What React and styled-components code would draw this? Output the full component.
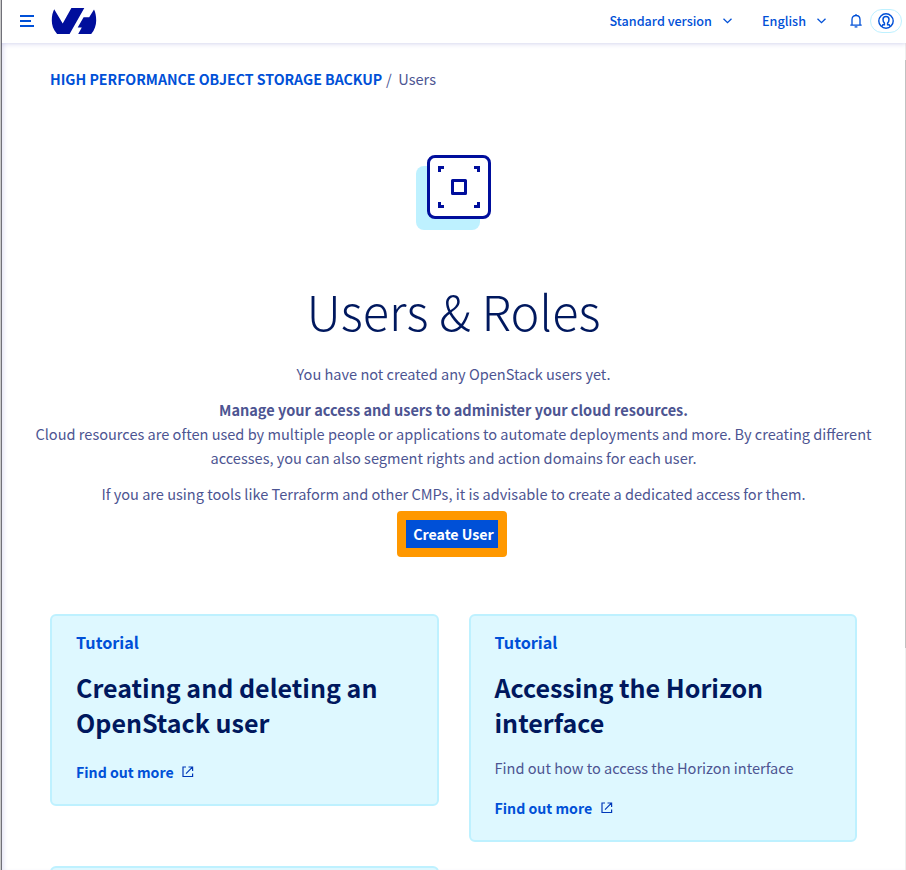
import React from 'react';
import styled, { createGlobalStyle } from 'styled-components';

const GlobalStyle = createGlobalStyle`
  * { box-sizing: border-box; }
  body { margin: 0; background: #fff; overflow: hidden; }
  h1, h2, h3, p { margin: 0; }
  svg { display: block; flex: none; }
`;

const Page = styled.div`
  position: relative;
  display: flex;
  flex-direction: column;
  width: 906px;
  height: 870px;
  overflow: hidden;
  background: #fff;
  border-left: 1px solid #c9c9c9;
  font-family: 'Noto Sans CJK SC', sans-serif;
  font-size: 14.57px;
  line-height: 24px;
  color: #4d5592;
`;

const Header = styled.header`
  display: flex;
  align-items: center;
  flex: none;
  height: 43px;
  padding: 0 4px 1px 18px;
  border-left: 1px solid #707078;
  background: #fff;
  box-shadow: 0 0 6px rgba(0, 14, 156, 0.2);
  z-index: 1;
`;

const LogoSlot = styled.div`
  margin-left: 17px;
  margin-right: auto;
`;

const Picker = styled.button`
  display: flex;
  align-items: center;
  gap: 10.5px;
  margin-right: ${(p) => p.$after}px;
  padding: 0;
  border: 0;
  background: none;
  font: 500 12.62px/20px 'Noto Sans CJK SC', sans-serif;
  color: #0050d7;
  white-space: nowrap;
`;

const Avatar = styled.div`
  display: flex;
  align-items: center;
  justify-content: center;
  width: 32px;
  height: 24px;
  margin-left: 8px;
  border: 1px solid #bef1ff;
  border-radius: 12px;
`;

const Body = styled.div`
  display: flex;
  flex: 1;
  min-height: 0;
  border-left: 1px solid #707078;
`;

const Content = styled.main`
  flex: 1;
  display: flex;
  flex-direction: column;
  box-shadow: inset 4px 0 4px -2px rgba(0, 14, 156, 0.1);
`;

const ScrollTrack = styled.div`
  width: 1px;
  padding-top: 17px;
  background: #eee;
`;

const ScrollThumb = styled.div`
  height: 588px;
  background: #c1c1c1;
`;

const Breadcrumb = styled.nav`
  display: flex;
  padding: 24px 48px 0;
  white-space: nowrap;
`;

const Crumb = styled.a`
  width: 333px;
  font-size: 14.15px;
  font-weight: 700;
  color: #0050d7;
`;

const Slash = styled.span`
  margin: 0 6.5px 0 3px;
`;

const Hero = styled.section`
  display: flex;
  flex-direction: column;
  align-items: center;
  padding-top: 64px;
  text-align: center;
  white-space: nowrap;
`;

const Title = styled.h1`
  margin-top: 49px;
  font-size: 48.7px;
  font-weight: 300;
  line-height: 60px;
  color: #00185e;
`;

const Text = styled.p`
  margin-top: ${(p) => p.$top || 12}px;
`;

const Strong = styled.strong`
  font-size: 14.54px;
  font-weight: 700;
`;

const Highlight = styled.div`
  display: flex;
  width: 110px;
  height: 46px;
  margin: 5px 3px 0 0;
  border: 9px solid #ff9800;
  border-radius: 4px;
  background: #ff9800;
`;

const PrimaryButton = styled.button`
  flex: 1;
  padding: 0 0 0 3px;
  border: 0;
  background: #0050d7;
  font: 700 14.2px/28px 'Noto Sans CJK SC', sans-serif;
  color: #fff;
  white-space: nowrap;
`;

const Cards = styled.section`
  display: grid;
  grid-template-columns: 389px 388px;
  align-items: start;
  column-gap: 30px;
  row-gap: 24px;
  padding: 57px 0 0 48px;
`;

const Card = styled.article`
  display: flex;
  flex-direction: column;
  align-items: flex-start;
  height: ${(p) => p.$height}px;
  padding: 14px 24px 0 ${(p) => p.$inset || 24}px;
  border: 2px solid #bef1ff;
  border-radius: 6px;
  background: #def8ff;
  white-space: nowrap;
`;

const Kind = styled.h3`
  font-size: 16.2px;
  font-weight: 700;
  line-height: 24px;
  color: #0050d7;
`;

const CardTitle = styled.h2`
  margin-top: 16px;
  font-size: 25.04px;
  font-weight: 700;
  line-height: 35px;
  color: #00185e;
`;

const CardText = styled.p`
  margin-top: 16px;
`;

const More = styled.a`
  display: flex;
  align-items: center;
  gap: 8.5px;
  margin-top: ${(p) => p.$top}px;
  font-size: 14.15px;
  font-weight: 700;
  color: #0050d7;
`;

const MenuIcon = () => (
  <svg width="14" height="13" viewBox="0 0 14 13" fill="#0050d7">
    <path d="M0 0h14v2H0zM0 5h11v2H0zM0 10h14v2H0z" />
  </svg>
);

const Logo = () => (
  <svg width="46" height="28" viewBox="51 7 46 28" fill="#000e9c">
    <path d="M54.2 9.2 62.7 23.4 71.4 8H84.3L69.6 33.9H57.1C53 29.5 51.8 25 51.8 20.5 51.8 16 52.6 12.3 54.2 9.2Z" />
    <path d="M94 9.4C95.5 12.4 96.2 16 96.2 20.4 96.2 25 94.6 30 91.2 33.9H78.2L81.8 27.6H77.7L83.6 17.3H89.2Z" />
  </svg>
);

const Chevron = () => (
  <svg width="9" height="6" viewBox="0 0 9 6" fill="none" stroke="#0050d7" strokeWidth="1.3">
    <path d="M.5 .7 4.5 4.6 8.5 .7" />
  </svg>
);

const Bell = () => (
  <svg width="12" height="14" viewBox="0 0 12 14" fill="none" stroke="#0050d7" strokeWidth="1.3">
    <path d="M.3 11.2H11.7M2 11V5.6C2 3 3.6 1.5 6 1.5S10 3 10 5.6V11M6 0V1.5" />
    <path d="M4.6 12.9H7.4" />
  </svg>
);

const UserIcon = () => (
  <svg width="16" height="16" viewBox="0 0 16 16" fill="none" stroke="#0050d7">
    <circle cx="8" cy="8" r="7.2" strokeWidth="1.4" />
    <path
      d="M3.9 13.2 4.9 11.8H6.4V10C5.4 9 5 7.9 5 6.5 5 4.6 6.1 3.5 8 3.5S11 4.6 11 6.5C11 7.9 10.6 9 9.6 10V11.8H11.1L12.1 13.2"
      strokeWidth="1.5"
    />
  </svg>
);

const StorageIcon = () => (
  <svg width="76" height="76" viewBox="0 0 76 76">
    <rect x="0" y="11" width="64" height="64" rx="8" fill="#bef1ff" />
    <rect x="12.5" y="1.5" width="61" height="61" rx="6.5" fill="#fff" stroke="#000e9c" strokeWidth="3" />
    <rect x="36.5" y="25.5" width="13" height="13" fill="none" stroke="#000e9c" strokeWidth="3" strokeLinejoin="round" />
    <path
      d="M23.5 17V12.5H28M58 12.5H62.5V17M23.5 47V51.5H28M58 51.5H62.5V47"
      fill="none"
      stroke="#000e9c"
      strokeWidth="3"
    />
  </svg>
);

const ExternalIcon = () => (
  <svg width="12" height="12" viewBox="0 0 12 12" fill="none" stroke="#0038b8" strokeWidth="1.2">
    <path d="M4 1H1V10.5H10.6V7.5M6.5 1H10.6V5M10.4 1.2 4 7.6" />
  </svg>
);

const FindOutMore = ({ top }) => (
  <More $top={top}>
    Find out more
    <ExternalIcon />
  </More>
);

export default function App() {
  return (
    <Page>
      <GlobalStyle />
      <Header>
        <MenuIcon />
        <LogoSlot>
          <Logo />
        </LogoSlot>
        <Picker $after={30.5}>
          Standard version
          <Chevron />
        </Picker>
        <Picker $after={24.5}>
          English
          <Chevron />
        </Picker>
        <Bell />
        <Avatar>
          <UserIcon />
        </Avatar>
      </Header>
      <Body>
        <Content>
          <Breadcrumb>
            <Crumb>HIGH PERFORMANCE OBJECT STORAGE BACKUP</Crumb>
            <Slash>/</Slash>
            <span>Users</span>
          </Breadcrumb>
          <Hero>
            <StorageIcon />
            <Title>Users &amp; Roles</Title>
            <Text $top={22}>You have not created any OpenStack users yet.</Text>
            <Text>
              <Strong>Manage your access and users to administer your cloud resources.</Strong>
              <br />
              Cloud resources are often used by multiple people or applications to automate deployments and more. By creating different
              <br />
              accesses, you can also segment rights and action domains for each user.
            </Text>
            <Text>If you are using tools like Terraform and other CMPs, it is advisable to create a dedicated access for them.</Text>
            <Highlight>
              <PrimaryButton>Create User</PrimaryButton>
            </Highlight>
          </Hero>
          <Cards>
            <Card $height={192}>
              <Kind>Tutorial</Kind>
              <CardTitle>
                Creating and deleting an
                <br />
                OpenStack user
              </CardTitle>
              <FindOutMore top={20} />
            </Card>
            <Card $height={228} $inset={23.5}>
              <Kind>Tutorial</Kind>
              <CardTitle>
                Accessing the Horizon
                <br />
                interface
              </CardTitle>
              <CardText>Find out how to access the Horizon interface</CardText>
              <FindOutMore top={16} />
            </Card>
            <Card $height={192} />
          </Cards>
        </Content>
        <ScrollTrack>
          <ScrollThumb />
        </ScrollTrack>
      </Body>
    </Page>
  );
}
